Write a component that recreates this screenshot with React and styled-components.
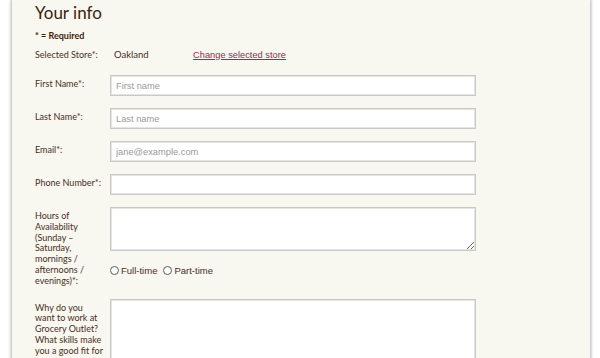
import styled, { createGlobalStyle } from "styled-components";

const GlobalStyle = createGlobalStyle`
  html, body {
    margin: 0;
    padding: 0;
    background: #ffffff;
  }
  body {
    font-family: "Lato", "Liberation Sans", sans-serif;
    overflow: hidden;
  }
`;

const Page = styled.div`
  padding: 0 10px 0 12px;
  height: 358px;
  overflow: hidden;
`;

const Panel = styled.div`
  width: 578px;
  min-height: 100%;
  box-sizing: border-box;
  background: #f8f7f0;
  box-shadow: 0 0 3px 1px rgba(0, 0, 0, 0.3);
  padding: 2px 0 0 23px;
`;

const Title = styled.h2`
  margin: 0;
  font-family: "Lato", sans-serif;
  font-weight: 400;
  font-size: 17px;
  line-height: 22px;
  color: #3c1e08;
`;

const Required = styled.div`
  margin-top: 6px;
  font-size: 9px;
  font-weight: 700;
  color: #3c1e08;
`;

const StoreRow = styled.div`
  display: flex;
  align-items: center;
  margin-top: 8px;
  font-size: 9px;
  color: #4b2e1a;
`;

const StoreLabel = styled.span`
  width: 79px;
`;

const StoreName = styled.span`
  width: 79px;
  font-size: 9.5px;
`;

const ChangeLink = styled.a`
  font-family: "Liberation Sans", Arial, sans-serif;
  font-size: 9.3px;
  color: #a8244c;
  text-decoration: underline;
  cursor: pointer;
`;

const Form = styled.div`
  display: flex;
  flex-direction: column;
  gap: 12px;
  margin-top: 15px;
`;

const Row = styled.div`
  display: flex;
  align-items: flex-start;
`;

const Label = styled.label`
  width: 68px;
  margin-right: 7px;
  flex: none;
  padding-top: 4px;
  font-size: 9px;
  line-height: 10.8px;
  color: #4b2e1a;
`;

const Field = styled.div`
  display: flex;
  flex-direction: column;
`;

const Input = styled.input`
  width: 366px;
  height: 21px;
  box-sizing: border-box;
  margin: 0;
  padding: 0 5px;
  border: 1px solid #c9c9c5;
  box-shadow: inset 0 0 0 1px #e4e4e0;
  background: #fff;
  font-family: "Liberation Sans", Arial, sans-serif;
  font-size: 9.3px;
  color: #333;
  outline: none;
  &::placeholder {
    color: #9a9a9a;
  }
`;

const TextArea = styled.textarea`
  display: block;
  width: 366px;
  height: ${(props) => props.h}px;
  box-sizing: border-box;
  margin: 0;
  border: 1px solid #c9c9c5;
  box-shadow: inset 0 0 0 1px #e4e4e0;
  background: #fff;
  resize: vertical;
  outline: none;
`;

const Options = styled.div`
  display: flex;
  align-items: center;
  gap: 6px;
  margin-top: 14px;
  font-family: "Liberation Sans", Arial, sans-serif;
  font-size: 9.5px;
  color: #4b2e1a;
`;

const Option = styled.label`
  display: flex;
  align-items: center;
  gap: 2px;
`;

const Radio = styled.span`
  width: 7px;
  height: 7px;
  border-radius: 50%;
  border: 1px solid #5a5a5a;
  background: #fff;
`;

const fields = [
  { label: "First Name*:", placeholder: "First name" },
  { label: "Last Name*:", placeholder: "Last name" },
  { label: "Email*:", placeholder: "jane@example.com" },
  { label: "Phone Number*:", placeholder: "" },
];

export default function App() {
  return (
    <Page>
      <GlobalStyle />
      <Panel>
        <Title>Your info</Title>
        <Required>* = Required</Required>
        <StoreRow>
          <StoreLabel>Selected Store*:</StoreLabel>
          <StoreName>Oakland</StoreName>
          <ChangeLink>Change selected store</ChangeLink>
        </StoreRow>
        <Form>
          {fields.map((f) => (
            <Row key={f.label}>
              <Label>{f.label}</Label>
              <Input placeholder={f.placeholder} />
            </Row>
          ))}
          <Row>
            <Label>
              Hours of Availability (Sunday – Saturday, mornings / afternoons /
              evenings)*:
            </Label>
            <Field>
              <TextArea h={44} />
              <Options>
                <Option>
                  <Radio />
                  Full-time
                </Option>
                <Option>
                  <Radio />
                  Part-time
                </Option>
              </Options>
            </Field>
          </Row>
          <Row>
            <Label>
              Why do you want to work at Grocery Outlet? What skills make you a
              good fit for this role?*:
            </Label>
            <Field>
              <TextArea h={80} />
            </Field>
          </Row>
        </Form>
      </Panel>
    </Page>
  );
}
